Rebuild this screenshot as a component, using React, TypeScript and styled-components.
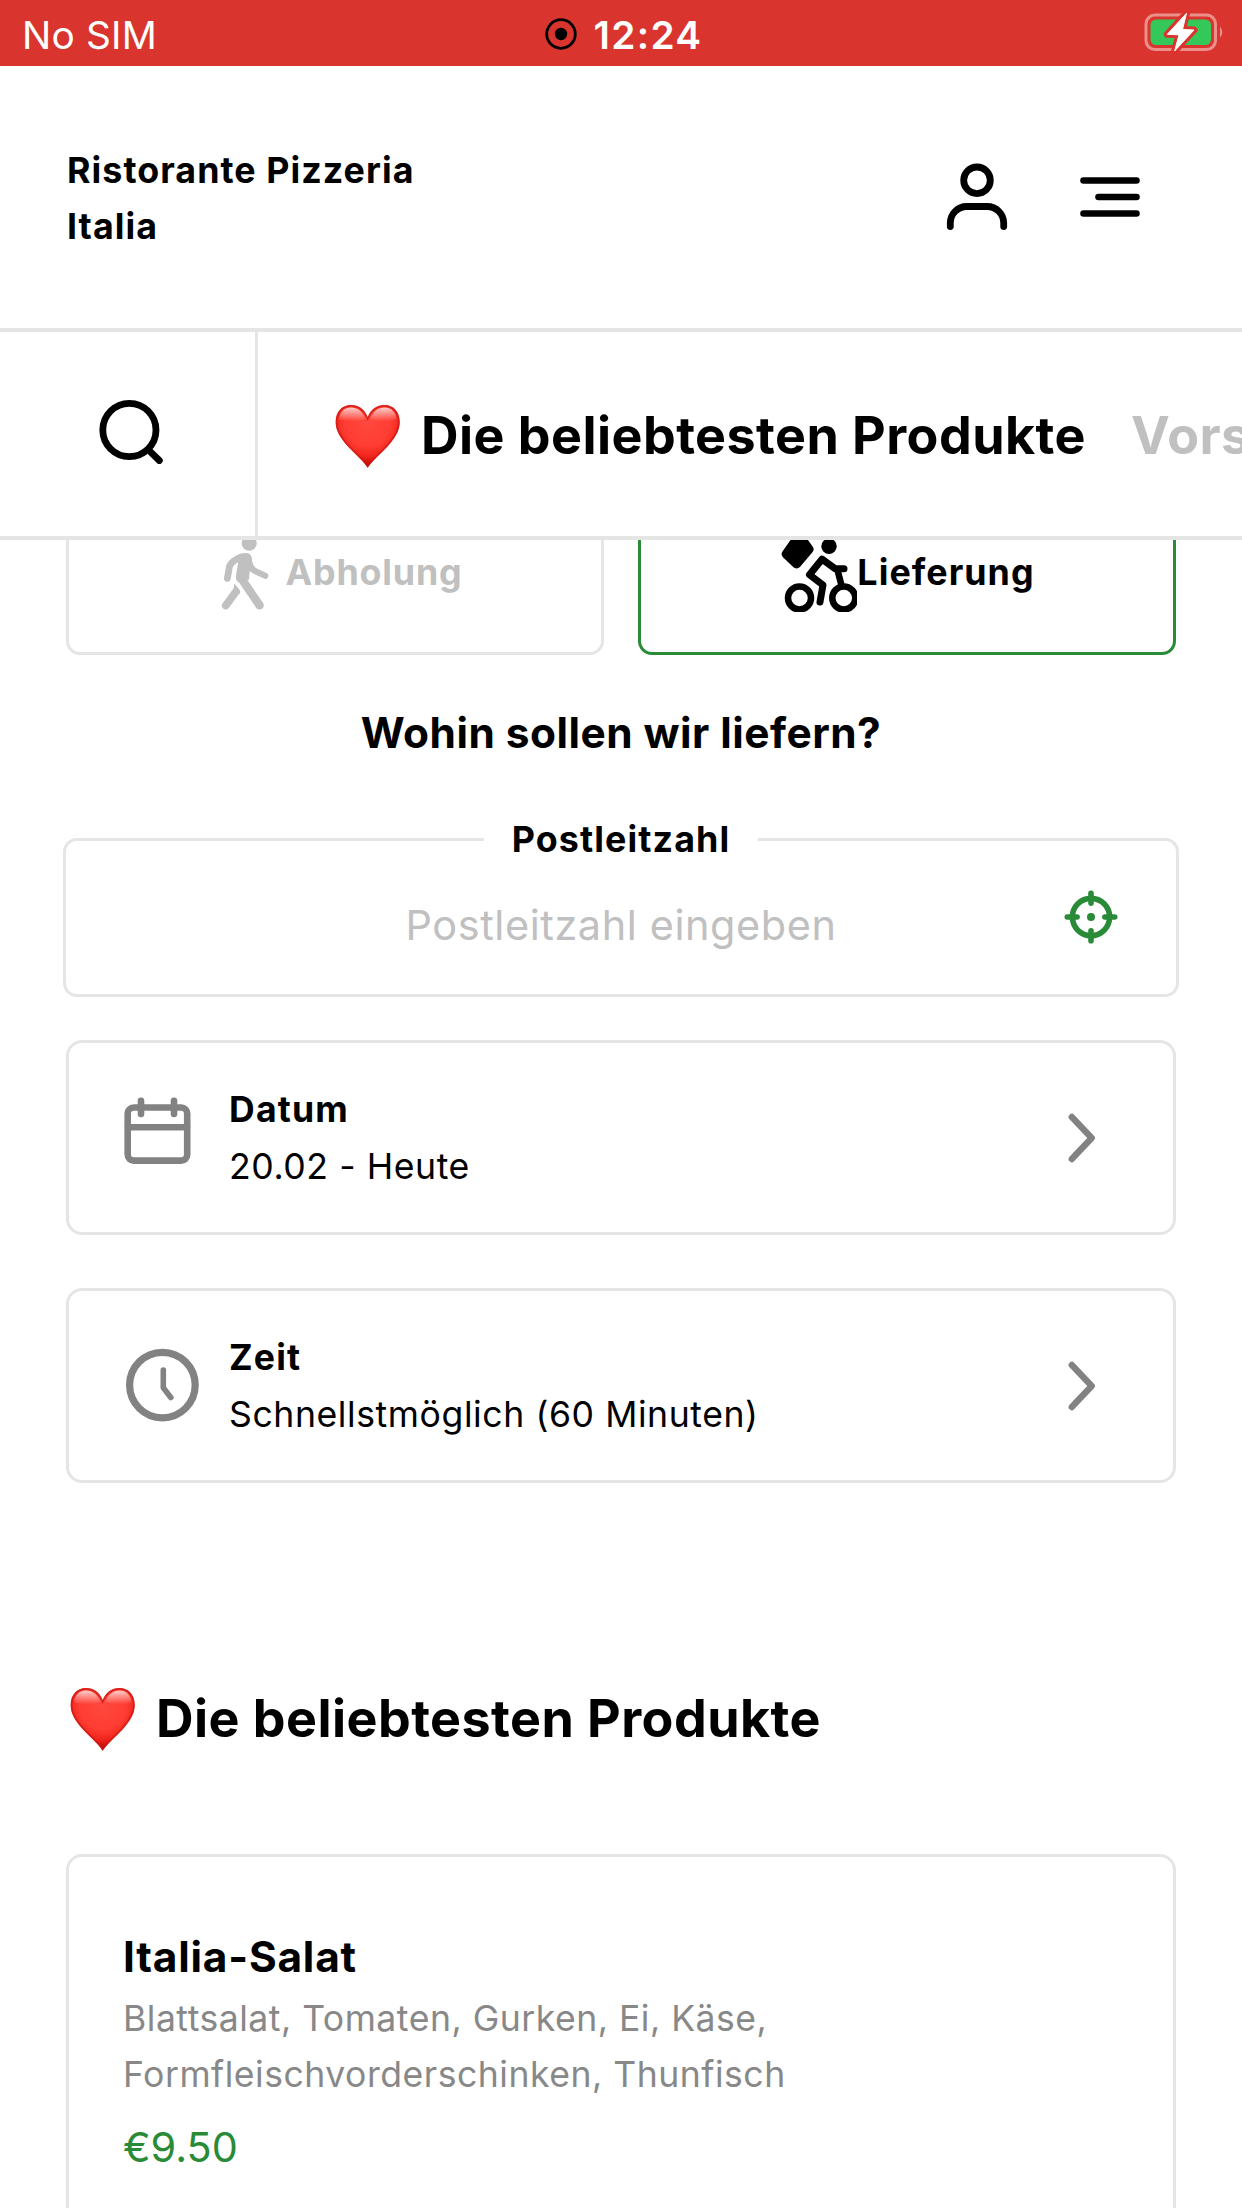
import React from "react";
import styled, { createGlobalStyle } from "styled-components";

const line = "#e5e5e5";
const green = "#298b37";
const muted = "#c0c0c0";
const iconGrey = "#828282";

const GlobalStyle = createGlobalStyle`
  *, *::before, *::after { box-sizing: border-box; }
  body {
    margin: 0;
    background: #fff;
    color: #000;
    font-family: Inter, Roboto, "Liberation Sans", sans-serif;
  }
  svg { display: block; flex: none; }
`;

const Screen = styled.div`
  display: flex;
  flex-direction: column;
  width: 1242px;
  height: 2208px;
  overflow: hidden;
  background: #fff;
`;

/* ---------- top bars ---------- */

const TopBars = styled.div`
  position: relative;
  z-index: 1;
  flex: none;
  background: #fff;
`;

const StatusBar = styled.div`
  display: grid;
  grid-template-columns: 1fr auto 1fr;
  align-items: center;
  height: 66px;
  padding: 2px 17px 0 22px;
  background: #d9342d;
  color: #fff;
  font-size: 38.8px;
`;

const Carrier = styled.span`
  letter-spacing: 0.2px;
`;

const Clock = styled.div`
  display: flex;
  align-items: center;
  gap: 17px;
  font-weight: 600;
  letter-spacing: 1.3px;
`;

const BatterySlot = styled.div`
  justify-self: end;
`;

const Header = styled.header`
  display: flex;
  align-items: center;
  justify-content: space-between;
  height: 266px;
  padding: 0 96px 0 67px;
  border-bottom: 4px solid ${line};
`;

const Brand = styled.h1`
  width: 420px;
  margin: 0;
  padding-top: 2px;
  font-size: 35.8px;
  font-weight: 700;
  line-height: 56.3px;
  letter-spacing: 1.05px;
`;

const HeaderActions = styled.div`
  display: flex;
  gap: 61px;
`;

const CategoryBar = styled.nav`
  display: flex;
  height: 208px;
  border-bottom: 4px solid ${line};
`;

const SearchCell = styled.div`
  display: flex;
  flex: none;
  align-items: center;
  justify-content: center;
  width: 258px;
  border-right: 3px solid ${line};
`;

const Categories = styled.div`
  display: flex;
  flex: 1;
  align-items: center;
  gap: 45px;
  padding: 5px 0 0 75px;
  overflow: hidden;
`;

const Category = styled.div<{ $active?: boolean }>`
  display: flex;
  flex: none;
  align-items: center;
  gap: 18px;
  font-size: 52px;
  font-weight: 700;
  letter-spacing: 0.45px;
  white-space: nowrap;
  color: ${(p) => (p.$active ? "#000" : muted)};
`;

const CategoryName = styled.span`
  padding-bottom: 3px;
`;

/* ---------- order form ---------- */

const Content = styled.main`
  display: flex;
  flex-direction: column;
  flex: none;
  margin-top: -52px;
  padding: 0 66px;
`;

const Modes = styled.div`
  display: grid;
  grid-template-columns: 1fr 1fr;
  gap: 34px;
`;

const Mode = styled.div<{ $active?: boolean }>`
  display: flex;
  align-items: center;
  justify-content: center;
  gap: ${(p) => (p.$active ? "0" : "16px")};
  height: 167px;
  padding-left: 2px;
  border: 3px solid ${(p) => (p.$active ? green : line)};
  border-radius: 14px;
  color: ${(p) => (p.$active ? "#000" : muted)};
  font-size: 35.8px;
  font-weight: 700;
  letter-spacing: ${(p) => (p.$active ? "1.05px" : "0.8px")};
`;

const Question = styled.h2`
  margin: 50px 0 0;
  font-size: 42.4px;
  font-weight: 700;
  line-height: 56px;
  letter-spacing: 0.48px;
  text-align: center;
`;

const PostcodeField = styled.fieldset`
  height: 180px;
  min-width: 0;
  margin: 56px -3px 0;
  padding: 0;
  border: 3px solid ${line};
  border-radius: 14px;
`;

const PostcodeLegend = styled.legend`
  margin: 0 auto;
  padding: 1px 28px 0;
  font-size: 35.8px;
  font-weight: 700;
  line-height: 43px;
  letter-spacing: 1.1px;
`;

const PostcodeRow = styled.div`
  display: grid;
  grid-template-columns: 115px 1fr 115px;
  align-items: center;
  height: 128px;
`;

const Placeholder = styled.span`
  grid-column: 2;
  color: ${muted};
  font-size: 41.4px;
  letter-spacing: 0.6px;
  text-align: center;
`;

const LocateButton = styled.div`
  padding-bottom: 16px;
`;

const OptionList = styled.div`
  display: grid;
  gap: 53px;
  margin-top: 43px;
`;

const Option = styled.div`
  display: flex;
  align-items: center;
  height: 195px;
  padding: 0 71px 1px 51px;
  border: 3px solid ${line};
  border-radius: 16px;
`;

const OptionText = styled.div`
  flex: 1;
  margin-left: 29px;
  padding-top: 3px;
  font-size: 35.6px;
  line-height: 56.3px;
`;

const OptionTitle = styled.div`
  font-weight: 700;
  letter-spacing: 1.2px;
`;

const OptionValue = styled.div`
  letter-spacing: 0.58px;
`;

/* ---------- menu ---------- */

const SectionTitle = styled.h2`
  display: flex;
  align-items: center;
  gap: 18px;
  height: 70px;
  margin: 202px 0 0 2px;
  font-size: 52px;
  font-weight: 700;
  letter-spacing: 0.45px;
`;

const Product = styled.article`
  height: 420px;
  margin-top: 99px;
  padding: 72px 54px 0;
  border: 3px solid ${line};
  border-radius: 16px;
`;

const ProductName = styled.h3`
  margin: 0;
  font-size: 42.4px;
  font-weight: 700;
  line-height: 56px;
  letter-spacing: 0.8px;
`;

const ProductDescription = styled.p`
  width: 700px;
  margin: 6px 0 0;
  color: #888;
  font-size: 35.6px;
  line-height: 56.3px;
  letter-spacing: 0.5px;
`;

const Price = styled.div`
  margin-top: 15px;
  color: ${green};
  font-size: 41.4px;
  line-height: 56px;
`;

/* ---------- icons ---------- */

const RecordIcon = () => (
  <svg width="32" height="32" viewBox="0 0 32 32">
    <circle cx="16" cy="16" r="14.3" fill="none" stroke="#000" strokeWidth="2.8" />
    <circle cx="16" cy="16" r="6.2" />
  </svg>
);

const BatteryIcon = () => {
  const bolt = "42.5,0.3 23.3,21.3 35,21.8 30.7,37.9 50,17 38.5,16.5";
  return (
    <svg width="81" height="42" viewBox="0 0 81 42">
      <rect x="2" y="2" width="69.5" height="34.5" rx="9" fill="none" stroke="#ec8f8b" strokeWidth="3" />
      <path d="M76 13.5 q4.6 5.8 0 11.6z" fill="#ec8f8b" />
      <rect x="6.5" y="6.5" width="60.5" height="25.5" rx="5.5" fill="#34c759" />
      <polygon points={bolt} fill="#d9342d" stroke="#d9342d" strokeWidth="7" strokeLinejoin="round" />
      <polygon points={bolt} fill="#fff" stroke="#fff" strokeWidth="1" strokeLinejoin="round" />
    </svg>
  );
};

const UserIcon = () => (
  <svg width="72" height="72" viewBox="0 0 72 72" fill="none" stroke="#000" strokeWidth="6.8" strokeLinecap="round">
    <circle cx="36" cy="19.3" r="13.3" />
    <path d="M9.3 65.5V62a16.5 16.5 0 0 1 16.5-16.5h20.4A16.5 16.5 0 0 1 62.7 62v3.5" />
  </svg>
);

const MenuIcon = () => (
  <svg width="72" height="72" viewBox="0 0 72 72" fill="none" stroke="#000" strokeWidth="6.6" strokeLinecap="round">
    <path d="M9.5 19.5h53M24.5 36h38M9.5 52.5h53" />
  </svg>
);

const SearchIcon = () => (
  <svg width="72" height="72" viewBox="0 0 72 72" fill="none" stroke="#000" strokeWidth="6.8" strokeLinecap="round">
    <circle cx="37.4" cy="32" r="26.6" />
    <path d="M57 52.3l10.3 10.2" />
  </svg>
);

const HeartIcon = ({ id }: { id: string }) => {
  const shape =
    "M42.7 72.3C39 66 31 59.5 23 51C15 42 10.7 35 10.7 26.5C10.7 16 17.5 9.6 26 9.6C33.5 9.6 39.5 13.8 42.7 21.5C46 13.8 52 9.6 59.5 9.6C68 9.6 74.7 16 74.7 26.5C74.7 35 70.5 42 62.5 51C54.5 59.5 46.5 66 42.7 72.3Z";
  return (
    <svg width="70" height="70" viewBox="8 6.6 70 70">
      <defs>
        <radialGradient id={`${id}-fill`} gradientUnits="userSpaceOnUse" cx="42.7" cy="28" r="46">
          <stop offset="0" stopColor="#ff483e" />
          <stop offset="0.5" stopColor="#ff3d33" />
          <stop offset="0.72" stopColor="#f0251c" />
          <stop offset="0.88" stopColor="#c60d06" />
          <stop offset="1" stopColor="#a80500" />
        </radialGradient>
        <linearGradient id={`${id}-shine`} x1="0" y1="0" x2="0" y2="1">
          <stop offset="0" stopColor="#fff" stopOpacity="0.75" />
          <stop offset="1" stopColor="#fff" stopOpacity="0" />
        </linearGradient>
        <clipPath id={`${id}-clip`}>
          <path d={shape} />
        </clipPath>
      </defs>
      <path d={shape} fill={`url(#${id}-fill)`} />
      <path d={shape} fill="none" stroke="#cc1a14" strokeOpacity="0.75" strokeWidth="3.4" clipPath={`url(#${id}-clip)`} />
      <path d="M14 24C14.5 16.5 19.5 12 26 12C32.5 12 37 15.5 40.5 23.5C34 26 20 27 14 24Z" fill={`url(#${id}-shine)`} />
      <path d="M71.5 24C71 16.5 66 12 59.5 12C53 12 48.5 15.5 45 23.5C51.5 26 65.5 27 71.5 24Z" fill={`url(#${id}-shine)`} />
    </svg>
  );
};

const WalkIcon = () => (
  <svg width="60" height="80" viewBox="0 1.5 60 80" fill="none" stroke="currentColor" strokeLinecap="round" strokeLinejoin="round">
    <circle cx="39.2" cy="12.6" r="7.6" fill="currentColor" stroke="none" />
    <path d="M31 26.7C25 29 20.7 32.5 19.4 36L17.400 47.800" strokeWidth="6.8" />
    <path d="M27 25C30 22.300 37 21.500 39.500 23.500C42 25.500 42 29 42.500 32.500L39.500 42L39 49L28.500 52C26 50 25.500 47.500 26 44.500L28 33Z" fill="currentColor" stroke="none" />
    <path d="M38.500 30C40 36 41.500 38.500 44.500 40.200L55.200 45.300" strokeWidth="6.200" />
    <path d="M31 47.500L49.600 74.900" strokeWidth="8.400" />
    <path d="M25.300 62L15.800 75" strokeWidth="7.800" />
    <path d="M24.300 53L29.800 59.500Q31 61.500 29.500 63.800L22 61Q24.300 57.500 24.300 53Z" fill="currentColor" stroke="none" />
  </svg>
);

const BikeIcon = () => (
  <svg width="76" height="80" viewBox="20.5 11.5 76 80" fill="none" stroke="#000" strokeLinecap="round" strokeLinejoin="round">
    <path d="M26 33.5L36 43.2L48.3 28.7L42 20H35.5Z" fill="#000" strokeWidth="9.5" />
    <circle cx="68.5" cy="25.7" r="7.7" fill="#000" stroke="none" />
    <circle cx="39" cy="77.5" r="11.500" strokeWidth="6.500" />
    <circle cx="83.300" cy="77.500" r="11.500" strokeWidth="6.500" />
    <path d="M83.500 48.200H74.500L61.500 38.700L49 54.300L62.500 64.500L59.500 81.500" strokeWidth="7" />
    <path d="M77 49.500L80.500 63" strokeWidth="6.600" />
  </svg>
);

const TargetIcon = () => (
  <svg width="60" height="60" viewBox="0 0 60 60" fill="none" stroke={green} strokeWidth="5.6" strokeLinecap="round">
    <circle cx="30" cy="30" r="18.6" />
    <path d="M30 6.3v9.8M30 43.9v9.8M6.3 30h9.8M43.9 30h9.8" />
    <circle cx="30" cy="30" r="4" fill={green} stroke="none" />
  </svg>
);

const CalendarIcon = () => (
  <svg width="80" height="80" viewBox="0 0 80 80" fill="none" stroke={iconGrey} strokeWidth="6.6" strokeLinecap="round">
    <rect x="7.7" y="10.5" width="59.5" height="53.1" rx="6" />
    <path d="M21 3.8V17M54 3.8V17M8 30.2H67" />
  </svg>
);

const TimeIcon = () => (
  <svg width="80" height="80" viewBox="0 0 80 80" fill="none" stroke={iconGrey} strokeLinecap="round" strokeLinejoin="round">
    <circle cx="42.4" cy="40.1" r="32.8" strokeWidth="7.2" />
    <path d="M43.3 25V42.8L50.8 52.5" strokeWidth="5.6" />
  </svg>
);

const ChevronIcon = () => (
  <svg width="40" height="60" viewBox="0 0 40 60" fill="none" stroke={iconGrey} strokeWidth="6.4" strokeLinecap="round" strokeLinejoin="round">
    <path d="M9.8 10L29.7 31L9.8 52" />
  </svg>
);

/* ---------- page ---------- */

const options = [
  { title: "Datum", value: "20.02 - Heute", Icon: CalendarIcon },
  { title: "Zeit", value: "Schnellstmöglich (60 Minuten)", Icon: TimeIcon },
];

export default function App() {
  return (
    <Screen>
      <GlobalStyle />
      <TopBars>
        <StatusBar>
          <Carrier>No SIM</Carrier>
          <Clock>
            <RecordIcon />
            <span>12:24</span>
          </Clock>
          <BatterySlot>
            <BatteryIcon />
          </BatterySlot>
        </StatusBar>
        <Header>
          <Brand>
            Ristorante Pizzeria
            <br />
            Italia
          </Brand>
          <HeaderActions>
            <UserIcon />
            <MenuIcon />
          </HeaderActions>
        </Header>
        <CategoryBar>
          <SearchCell>
            <SearchIcon />
          </SearchCell>
          <Categories>
            <Category $active>
              <HeartIcon id="nav-heart" />
              <CategoryName>Die beliebtesten Produkte</CategoryName>
            </Category>
            <Category>
              <CategoryName>Vors</CategoryName>
            </Category>
          </Categories>
        </CategoryBar>
      </TopBars>

      <Content>
        <Modes>
          <Mode>
            <WalkIcon />
            <span>Abholung</span>
          </Mode>
          <Mode $active>
            <BikeIcon />
            <span>Lieferung</span>
          </Mode>
        </Modes>

        <Question>Wohin sollen wir liefern?</Question>

        <PostcodeField>
          <PostcodeLegend>Postleitzahl</PostcodeLegend>
          <PostcodeRow>
            <Placeholder>Postleitzahl eingeben</Placeholder>
            <LocateButton>
              <TargetIcon />
            </LocateButton>
          </PostcodeRow>
        </PostcodeField>

        <OptionList>
          {options.map(({ title, value, Icon }) => (
            <Option key={title}>
              <Icon />
              <OptionText>
                <OptionTitle>{title}</OptionTitle>
                <OptionValue>{value}</OptionValue>
              </OptionText>
              <ChevronIcon />
            </Option>
          ))}
        </OptionList>

        <SectionTitle>
          <HeartIcon id="section-heart" />
          <CategoryName>Die beliebtesten Produkte</CategoryName>
        </SectionTitle>

        <Product>
          <ProductName>Italia-Salat</ProductName>
          <ProductDescription>
            Blattsalat, Tomaten, Gurken, Ei, Käse,
            <br />
            Formfleischvorderschinken, Thunfisch
          </ProductDescription>
          <Price>€9.50</Price>
        </Product>
      </Content>
    </Screen>
  );
}
